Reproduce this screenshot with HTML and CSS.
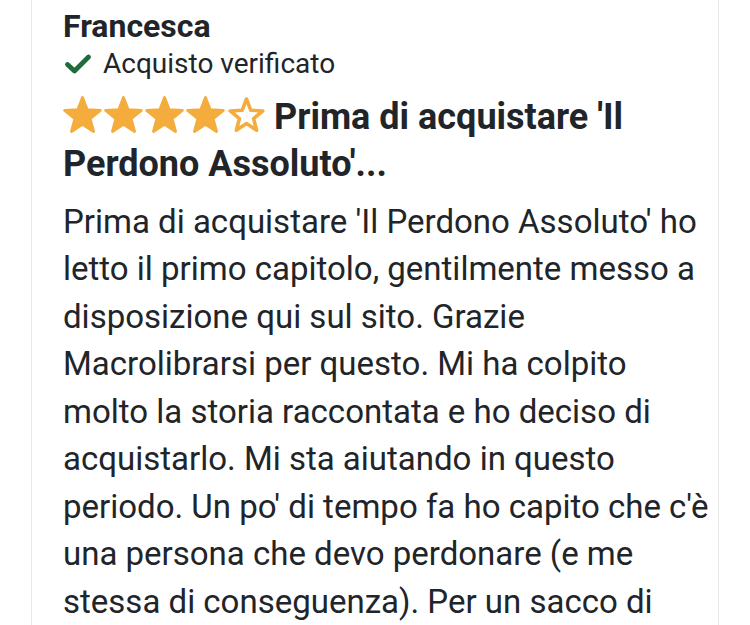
FILE: index.html
```html
<!DOCTYPE html>
<html lang="it">
<head>
<meta charset="utf-8">
<link rel="stylesheet" href="styles.css">
</head>
<body>
<div class="page">
  <article class="review">
    <div class="author">Francesca</div>
    <div class="verified">
      <svg class="check" viewBox="0 0 30 22" width="30" height="22"><path d="M4.5 11.5 L11.5 18 L25.5 4" fill="none" stroke="#1f6b3a" stroke-width="4.8" stroke-linecap="round" stroke-linejoin="round"/></svg>
      <span>Acquisto verificato</span>
    </div>
    <h3 class="title"><span class="stars"><svg viewBox="1.7 1.7 20.6 19.7" class="star"><path d="M12 2.5L14.53 9.02 21.51 9.41 16.09 13.83 17.88 20.59 12 16.8 6.12 20.59 7.91 13.83 2.49 9.41 9.47 9.02Z" fill="#f4ad3d" stroke="#f4ad3d" stroke-width="1.5" stroke-linejoin="round"/></svg><svg viewBox="1.7 1.7 20.6 19.7" class="star"><path d="M12 2.5L14.53 9.02 21.51 9.41 16.09 13.83 17.88 20.59 12 16.8 6.12 20.59 7.91 13.83 2.49 9.41 9.47 9.02Z" fill="#f4ad3d" stroke="#f4ad3d" stroke-width="1.5" stroke-linejoin="round"/></svg><svg viewBox="1.7 1.7 20.6 19.7" class="star"><path d="M12 2.5L14.53 9.02 21.51 9.41 16.09 13.83 17.88 20.59 12 16.8 6.12 20.59 7.91 13.83 2.49 9.41 9.47 9.02Z" fill="#f4ad3d" stroke="#f4ad3d" stroke-width="1.5" stroke-linejoin="round"/></svg><svg viewBox="1.7 1.7 20.6 19.7" class="star"><path d="M12 2.5L14.53 9.02 21.51 9.41 16.09 13.83 17.88 20.59 12 16.8 6.12 20.59 7.91 13.83 2.49 9.41 9.47 9.02Z" fill="#f4ad3d" stroke="#f4ad3d" stroke-width="1.5" stroke-linejoin="round"/></svg><svg viewBox="1.7 1.7 20.6 19.7" class="star"><path d="M12 3.3L14.3 9.3 20.7 9.65 15.75 13.7 17.4 19.9 12 16.4 6.6 19.9 8.25 13.7 3.3 9.65 9.7 9.3Z" fill="none" stroke="#f4ad3d" stroke-width="1.9" stroke-linejoin="round"/></svg></span>Prima di acquistare 'Il Perdono Assoluto'...</h3>
    <p class="body">Prima di acquistare 'Il Perdono Assoluto' ho letto il primo capitolo, gentilmente messo a disposizione qui sul sito. Grazie Macrolibrarsi per questo. Mi ha colpito molto la storia raccontata e ho deciso di acquistarlo. Mi sta aiutando in questo periodo. Un po' di tempo fa ho capito che c'è una persona che devo perdonare (e me stessa di conseguenza). Per un sacco di anni ho portato dentro di me rancore e rabbia.</p>
  </article>
</div>
</body>
</html>
```
FILE: styles.css
```css
html, body {
  margin: 0;
  padding: 0;
  background: #ffffff;
}
body {
  font-family: Roboto, "Liberation Sans", sans-serif;
  color: #212529;
  overflow: hidden;
}
.page {
  padding: 0 31px;
}
.review {
  border-left: 1px solid #e9e9ea;
  border-right: 1px solid #e9e9ea;
  padding: 6px 6px 0 31px;
}
.author {
  font-size: 32px;
  font-weight: 700;
  line-height: 40px;
}
.verified {
  display: flex;
  align-items: center;
  gap: 10px;
  font-size: 28px;
  line-height: 36px;
}
.check {
  display: block;
}
.title {
  margin: 12.2px 0 0;
  font-size: 36px;
  font-weight: 700;
  line-height: 47px;
}
.stars {
  display: inline-flex;
  gap: 2px;
  vertical-align: -4px;
  margin-right: 8px;
}
.star {
  width: 39px;
  height: 37px;
  display: block;
}
.body {
  margin: 9.7px 0 0;
  font-size: 33px;
  line-height: 47.5px;
}
```
